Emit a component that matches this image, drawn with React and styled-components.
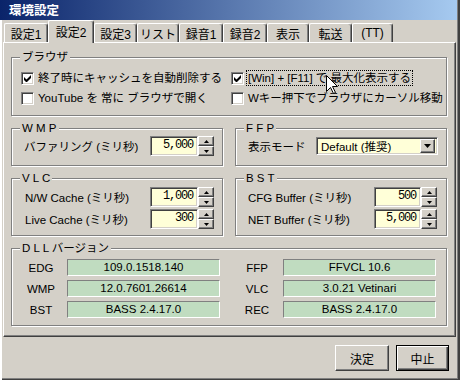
import React from "react";
import styled, { createGlobalStyle } from "styled-components";

const GlobalStyle = createGlobalStyle`
  html, body { margin: 0; padding: 0; background: #d4d0c8; }
  body {
    font-family: "Liberation Sans", "Noto Sans CJK JP", sans-serif;
    font-size: 11.5px;
    color: #000;
  }
  * { box-sizing: border-box; }
`;

const Window = styled.div`
  position: relative;
  width: 460px;
  height: 380px;
  background: #d4d0c8;
  display: flex;
  flex-direction: column;
  box-shadow: inset 2px 0 #ffffff, inset 1px 0 #d4d0c8, inset -2px -1px #404040,
    inset -3px -2px #808080;
`;

const TitleBar = styled.div`
  height: 20px;
  margin-right: 3px;
  background: linear-gradient(to right, #0a246a, #a6caf0);
  color: #fff;
  font-family: "Noto Sans CJK JP", sans-serif;
  font-weight: bold;
  font-size: 12.5px;
  line-height: 20px;
  padding-left: 9px;
`;

const TabStrip = styled.div`
  display: flex;
  align-items: flex-end;
  height: 22px;
  padding-left: 4px;
`;

const Tab = styled.div`
  position: relative;
  z-index: ${(p) => (p.$active ? 2 : 0)};
  width: ${(p) => p.$w}px;
  height: ${(p) => (p.$active ? 23 : 19)}px;
  margin-bottom: ${(p) => (p.$active ? -1 : 0)}px;
  padding-bottom: ${(p) => (p.$active ? 2 : 0)}px;
  background: #d4d0c8;
  border-top: 1px solid #fff;
  border-left: 1px solid #fff;
  border-right: 1px solid #404040;
  box-shadow: inset -1px 0 #808080;
  border-radius: 2px 3px 0 0;
  display: flex;
  align-items: center;
  justify-content: center;
  font-size: 12px;
  white-space: nowrap;
`;

const TabPage = styled.div`
  width: 453px;
  height: 295px;
  margin-left: 3px;
  border-top: 1px solid #fff;
  border-left: 1px solid #fff;
  border-right: 1px solid #404040;
  border-bottom: 1px solid #404040;
  box-shadow: inset -1px -1px #808080;
  padding: 7px 8px 0 7px;
  display: grid;
  grid-template-columns: 212px 212px;
  column-gap: 12px;
  row-gap: 5px;
  align-content: start;
`;

const Group = styled.fieldset`
  margin: 0;
  padding: 0;
  min-width: 0;
  border: 1px solid #808080;
  box-shadow: inset 1px 1px #fff, 1px 1px #fff;
  grid-column: ${(p) => (p.$wide ? "1 / -1" : "auto")};
`;

const Legend = styled.legend`
  margin-left: 8px;
  padding: 0 2px;
  line-height: 14px;
  background: #d4d0c8;
  white-space: pre;
`;

const CheckGrid = styled.div`
  display: grid;
  grid-template-columns: 210px 210px;
  grid-auto-rows: 20px;
  padding: 4px 0 7px 9px;
`;

const CheckRow = styled.div`
  display: flex;
  align-items: center;
  gap: 2px;
  white-space: nowrap;
`;

const CheckBox = styled.span`
  flex: none;
  width: 13px;
  height: 13px;
  background: #fff;
  border-top: 1px solid #808080;
  border-left: 1px solid #808080;
  border-bottom: 1px solid #fff;
  border-right: 1px solid #fff;
  box-shadow: inset 1px 1px #404040, inset -1px -1px #d4d0c8;
  display: flex;
  align-items: center;
  justify-content: center;
`;

const CheckText = styled.span`
  padding: 0 1px;
  line-height: 14px;
  border: 1px dotted ${(p) => (p.$focus ? "#000" : "transparent")};
`;

const Rows = styled.div`
  display: flex;
  flex-direction: column;
  gap: 2px;
  padding: ${(p) => p.$pad};
`;

const Row = styled.div`
  display: flex;
  align-items: center;
  height: 20px;
`;

const RowLabel = styled.span`
  flex: 1;
  white-space: nowrap;
`;

const sunken = `
  border-top: 1px solid #808080;
  border-left: 1px solid #808080;
  border-bottom: 1px solid #fff;
  border-right: 1px solid #fff;
  box-shadow: inset 1px 1px #404040, inset -1px -1px #d4d0c8;
`;

const raised = `
  background: #d4d0c8;
  border-top: 1px solid #fff;
  border-left: 1px solid #fff;
  border-bottom: 1px solid #404040;
  border-right: 1px solid #404040;
  box-shadow: inset -1px -1px #808080;
`;

const NumBox = styled.div`
  flex: none;
  width: ${(p) => p.$w}px;
  height: 20px;
  background: #ffffd8;
  ${sunken}
  font-family: "Liberation Mono", monospace;
  font-size: 12px;
  letter-spacing: -1.2px;
  text-align: right;
  padding-right: 4px;
  line-height: 17px;
`;

const Spin = styled.div`
  flex: none;
  width: 16px;
  height: 20px;
  display: flex;
  flex-direction: column;
`;

const SpinBtn = styled.div`
  flex: 1;
  ${raised}
  display: flex;
  align-items: center;
  justify-content: center;
`;

const Combo = styled.div`
  flex: none;
  width: 122px;
  height: 18px;
  background: #ffffd8;
  ${sunken}
  display: flex;
  align-items: center;
  padding: 2px 2px 2px 4px;
  white-space: nowrap;
`;

const DropBtn = styled.div`
  margin-left: auto;
  width: 15px;
  height: 14px;
  ${raised}
  display: flex;
  align-items: center;
  justify-content: center;
`;

const DllGrid = styled.div`
  display: grid;
  grid-template-columns: 216px 216px;
  row-gap: 4px;
  padding: 4px 0 7px 8px;
`;

const DllItem = styled.div`
  display: flex;
  align-items: center;
  gap: 5px;
`;

const DllLabel = styled.span`
  width: 42px;
  text-align: center;
`;

const DllValue = styled.div`
  width: 153px;
  height: 17px;
  background: #c0dcc0;
  border-top: 1px solid #808080;
  border-left: 1px solid #808080;
  border-bottom: 1px solid #fff;
  border-right: 1px solid #fff;
  text-align: center;
  line-height: 15px;
  white-space: nowrap;
`;

const Footer = styled.div`
  display: flex;
  justify-content: flex-end;
  gap: 7px;
  padding: 8px 11px 0 0;
`;

const Button = styled.button`
  width: ${(p) => p.$w}px;
  height: 26px;
  margin: 0;
  padding: 0;
  font-family: "Noto Sans CJK JP", sans-serif;
  font-size: 12px;
  color: #000;
  background: #d4d0c8;
  ${(p) =>
    p.$default
      ? `border: 1px solid #000;
         box-shadow: inset 1px 1px #fff, inset -1px -1px #404040, inset -2px -2px #808080;`
      : `border-top: 1px solid #fff;
         border-left: 1px solid #fff;
         border-bottom: 1px solid #404040;
         border-right: 1px solid #404040;
         box-shadow: inset -1px -1px #808080;`}
`;

const Cursor = styled.svg`
  position: absolute;
  left: 326px;
  top: 75px;
  pointer-events: none;
`;

const tabs = [
  { label: "設定1", w: 44 },
  { label: "設定2", w: 46, active: true },
  { label: "設定3", w: 43 },
  { label: "リスト", w: 42 },
  { label: "録音1", w: 44 },
  { label: "録音2", w: 44 },
  { label: "表示", w: 42 },
  { label: "転送", w: 43 },
  { label: "(TT)", w: 41 },
];

const Check = () => (
  <svg width="7" height="7" viewBox="0 0 7 7">
    <path d="M0 2v3l2 2h1l4-4V0L2.5 4.5z" fill="#000" />
  </svg>
);

const UpArrow = () => (
  <svg width="5" height="3" viewBox="0 0 5 3">
    <path d="M2.5 0L5 3H0z" fill="#000" />
  </svg>
);

const DownArrow = ({ w = 5, h = 3 }) => (
  <svg width={w} height={h} viewBox={`0 0 ${w} ${h}`}>
    <path d={`M0 0H${w}L${w / 2} ${h}z`} fill="#000" />
  </svg>
);

const Spinner = () => (
  <Spin>
    <SpinBtn>
      <UpArrow />
    </SpinBtn>
    <SpinBtn>
      <DownArrow />
    </SpinBtn>
  </Spin>
);

const NumRow = ({ label, value, w }) => (
  <Row>
    <RowLabel>{label}</RowLabel>
    <NumBox $w={w}>{value}</NumBox>
    <Spinner />
  </Row>
);

const dll = [
  ["EDG", "109.0.1518.140", "FFP", "FFVCL 10.6"],
  ["WMP", "12.0.7601.26614", "VLC", "3.0.21 Vetinari"],
  ["BST", "BASS 2.4.17.0", "REC", "BASS 2.4.17.0"],
];

export default function App() {
  return (
    <>
      <GlobalStyle />
      <Window>
        <TitleBar>環境設定</TitleBar>
        <TabStrip>
          {tabs.map((t) => (
            <Tab key={t.label} $w={t.w} $active={t.active}>
              {t.label}
            </Tab>
          ))}
        </TabStrip>
        <TabPage>
          <Group $wide>
            <Legend>ブラウザ</Legend>
            <CheckGrid>
              <CheckRow>
                <CheckBox>
                  <Check />
                </CheckBox>
                <CheckText>終了時にキャッシュを自動削除する</CheckText>
              </CheckRow>
              <CheckRow>
                <CheckBox>
                  <Check />
                </CheckBox>
                <CheckText $focus>[Win] + [F11] で 最大化表示する</CheckText>
              </CheckRow>
              <CheckRow>
                <CheckBox />
                <CheckText>YouTube を 常に ブラウザで開く</CheckText>
              </CheckRow>
              <CheckRow>
                <CheckBox />
                <CheckText>Wキー押下でブラウザにカーソル移動</CheckText>
              </CheckRow>
            </CheckGrid>
          </Group>

          <Group>
            <Legend>W M P</Legend>
            <Rows $pad="1px 8px 9px 12px">
              <NumRow label="バファリング (ミリ秒)" value="5,000" w={48} />
            </Rows>
          </Group>

          <Group>
            <Legend>F F P</Legend>
            <Rows $pad="1px 8px 9px 12px">
              <Row>
                <RowLabel>表示モード</RowLabel>
                <Combo>
                  Default (推奨)
                  <DropBtn>
                    <DownArrow w={7} h={4} />
                  </DropBtn>
                </Combo>
              </Row>
            </Rows>
          </Group>

          <Group>
            <Legend>V L C</Legend>
            <Rows $pad="2px 8px 6px 13px">
              <NumRow label="N/W Cache (ミリ秒)" value="1,000" w={48} />
              <NumRow label="Live Cache (ミリ秒)" value="300" w={48} />
            </Rows>
          </Group>

          <Group>
            <Legend>B S T</Legend>
            <Rows $pad="2px 9px 6px 12px">
              <NumRow label="CFG Buffer (ミリ秒)" value="500" w={47} />
              <NumRow label="NET Buffer (ミリ秒)" value="5,000" w={47} />
            </Rows>
          </Group>

          <Group $wide>
            <Legend>D L L バージョン</Legend>
            <DllGrid>
              {dll.map(([l1, v1, l2, v2]) => (
                <React.Fragment key={l1}>
                  <DllItem>
                    <DllLabel>{l1}</DllLabel>
                    <DllValue>{v1}</DllValue>
                  </DllItem>
                  <DllItem>
                    <DllLabel>{l2}</DllLabel>
                    <DllValue>{v2}</DllValue>
                  </DllItem>
                </React.Fragment>
              ))}
            </DllGrid>
          </Group>
        </TabPage>
        <Footer>
          <Button $w={54}>決定</Button>
          <Button $w={53} $default>
            中止
          </Button>
        </Footer>
        <Cursor width="12" height="19" viewBox="0 0 12 19">
          <path
            d="M0.5 0.5V16.5L4.5 12.5L7.5 18.5L9.5 17.5L6.5 11.5H11.5Z"
            fill="#fff"
            stroke="#000"
            strokeWidth="1"
          />
        </Cursor>
      </Window>
    </>
  );
}
